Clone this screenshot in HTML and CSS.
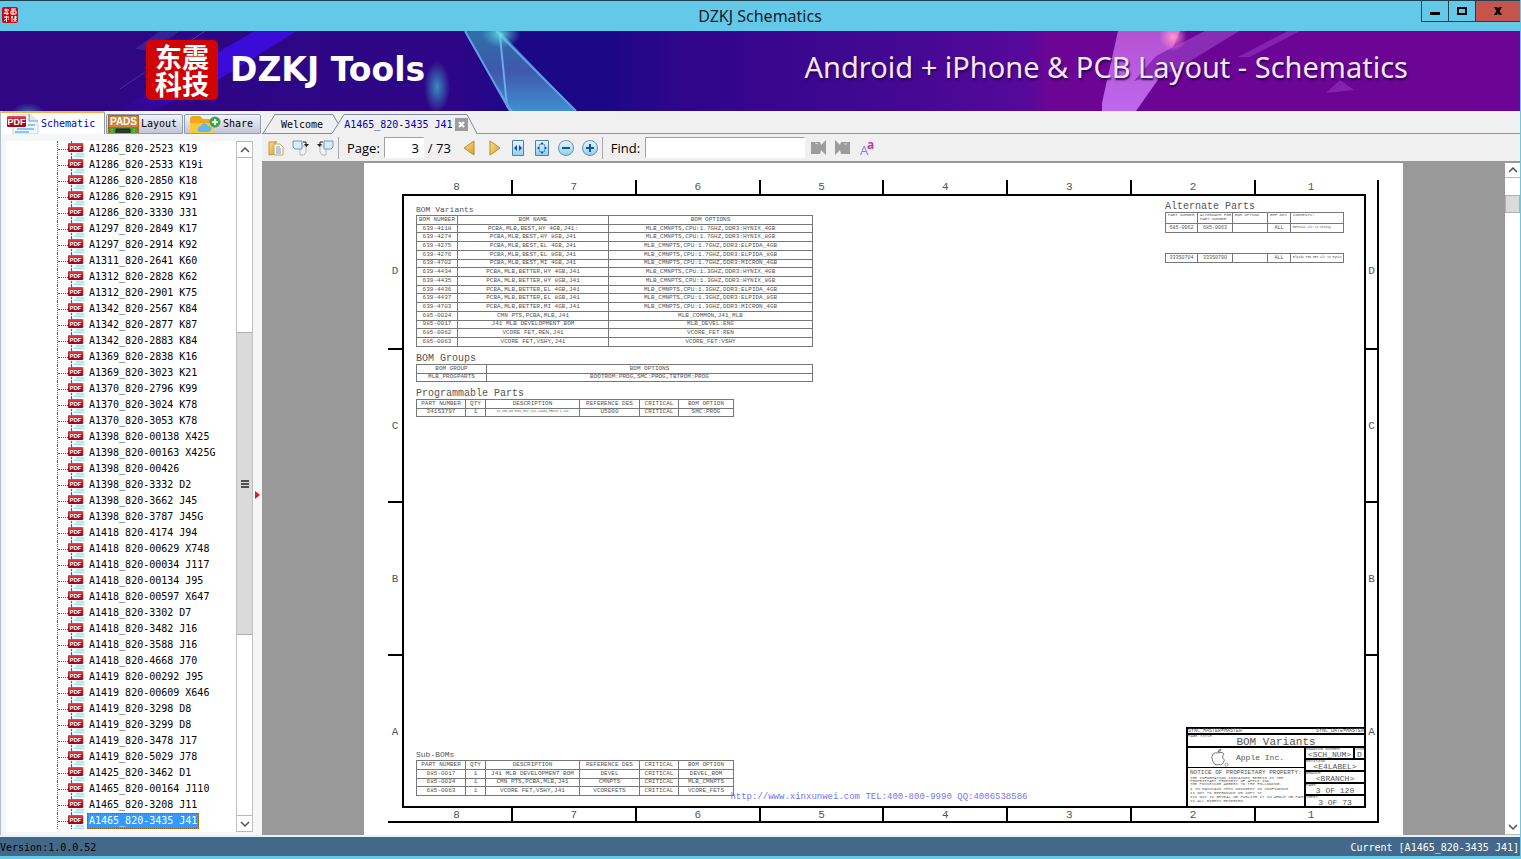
FILE: index.html
```html
<!DOCTYPE html>
<html lang="en">
<head>
<meta charset="utf-8">
<title>DZKJ Schematics</title>
<link rel="stylesheet" href="styles.css">
</head>
<body>
<svg class="defs" aria-hidden="true">
  <defs>
    <linearGradient id="red" x1="0" y1="0" x2="0" y2="1"><stop offset="0" stop-color="#e0505a"/><stop offset=".5" stop-color="#b80c18"/><stop offset="1" stop-color="#a00814"/></linearGradient>
    <linearGradient id="gold" x1="0" y1="0" x2="1" y2="1"><stop offset="0" stop-color="#fbe28a"/><stop offset="1" stop-color="#d9a02c"/></linearGradient>
    <linearGradient id="sky" x1="0" y1="0" x2="0" y2="1"><stop offset="0" stop-color="#e8f7ff"/><stop offset="1" stop-color="#8fcdf4"/></linearGradient>
    <symbol id="pdf" viewBox="0 0 17 16">
      <path d="M3 0h9l5 4v12H3z" fill="#eef9ff"/><path d="M3.500 0v2m0 10v4" stroke="#556" stroke-dasharray="2 1"/>
      <path d="M15 2v9M8 13h8M6 15.500h10" stroke="#a4dcf4" stroke-width="1.500"/>
      <rect y="2" width="15" height="9" rx="1" fill="url(#red)"/>
      <text x="7.500" y="9" text-anchor="middle" class="pdf-text">PDF</text>
    </symbol>
  </defs>
</svg>
<div class="window">
  <header class="titlebar">
    <svg class="appicon" viewBox="0 0 16 16"><rect width="16" height="16" rx="2" fill="#c80a10"/><path d="M2 3h5M4 1.500v3l-2 2h5M5 4v4M9 2h5M9 4h5v3H9zM11 2v6M2 10h5M4.500 9v6M2 14l3-3M6 12h1M9 10h2m-1-1v6M12 10h3m-1.500-1v3m-2 0h3l-3 3m0-3 3 3" stroke="#fff" fill="none"/></svg>
    <h1>DZKJ Schematics</h1>
    <div class="winbtns">
      <button aria-label="Minimize"><svg viewBox="0 0 12 12" width="12" height="12"><path d="M1 7h10v3H1z"/></svg></button>
      <button aria-label="Maximize"><svg viewBox="0 0 12 12" width="12" height="12"><path d="M2 3h8v6H2z" fill="none" stroke="#000" stroke-width="2"/></svg></button>
      <button class="close" aria-label="Close"><svg viewBox="0 0 12 12" width="12" height="12"><path d="M2 2h3l1 2 1-2h3L7.500 6l2.500 4H7L6 8l-1 2H2l2.500-4z"/></svg></button>
    </div>
  </header>

  <div class="banner">
    <svg class="art" viewBox="0 0 1520 80" preserveAspectRatio="none" aria-hidden="true">
      <defs>
        <linearGradient id="bg"><stop offset="0" stop-color="#300684"/><stop offset=".3" stop-color="#2c0686"/><stop offset=".34" stop-color="#1c0886"/><stop offset=".4" stop-color="#1c0886"/><stop offset=".45" stop-color="#30058a"/><stop offset=".6" stop-color="#450893"/><stop offset=".675" stop-color="#56089a"/><stop offset=".69" stop-color="#6c0596"/><stop offset="1" stop-color="#6c0597"/></linearGradient>
        <linearGradient id="beam" x1="1" y1="0" x2="0" y2="1"><stop offset="0" stop-color="#3d0bd8"/><stop offset=".5" stop-color="#3a0bd8"/><stop offset="1" stop-color="#3a0bd8" stop-opacity="0"/></linearGradient>
        <linearGradient id="glass" x1="0" y1="0" x2="0" y2="1"><stop offset="0" stop-color="#2f6fa8"/><stop offset=".5" stop-color="#3f58ac"/><stop offset="1" stop-color="#3f8fd0"/></linearGradient>
        <linearGradient id="pink" x1="0" y1="0" x2="0" y2="1"><stop offset="0" stop-color="#b452d2"/><stop offset="1" stop-color="#c067ee"/></linearGradient>
        <radialGradient id="glow"><stop offset="0" stop-color="#3c8ac0"/><stop offset="1" stop-color="#3c8ac0" stop-opacity="0"/></radialGradient>
        <radialGradient id="cyan"><stop offset="0" stop-color="#70f0e8"/><stop offset="1" stop-color="#58c8e0" stop-opacity="0"/></radialGradient>
        <radialGradient id="rose"><stop offset="0" stop-color="#ff98d0"/><stop offset="1" stop-color="#ff88d0" stop-opacity="0"/></radialGradient>
      </defs>
      <rect width="1520" height="80" fill="url(#bg)"/>
      <path d="M150 20 180 0h-20l-25 18z" fill="#4330a0" opacity=".6"/>
      <path d="M120 58 205 0M165 27 205 0" stroke="#5c48b4" opacity=".6"/>
      <path d="M255 0h42L200 60l-50 20h-35z" fill="url(#beam)"/>
      <ellipse cx="437" cy="56" rx="13" ry="26" fill="url(#glow)"/>
      <ellipse cx="28" cy="80" rx="16" ry="8" fill="url(#glow)" opacity=".6"/>
      <path d="M465 0h35l76 80h-66z" fill="url(#glass)"/>
      <path d="M500 5l7 70 5 5" fill="none" stroke="#6fa8f0" stroke-width="2"/>
      <path d="M465 0l45 80M496 0l80 80M498 58l12 20" stroke="#63a0e4" stroke-width="2"/>
      <ellipse cx="501" cy="3" rx="20" ry="14" fill="url(#cyan)" opacity=".8"/>
      <path d="M1118 0h62l-18 43-26 37h-34v-8z" fill="url(#pink)"/>
      <path d="M1205 0h34l-65 40-40 10 22-25z" fill="#8b2cb6"/>
      <path d="M1288 0h12l-50 26-12 0zM1340 49l14 10-28 3z" fill="#8422b0"/>
      <circle cx="1173" cy="6" r="14" fill="url(#rose)"/>
    </svg>
    <div class="brand">
      <div class="seal" lang="zh"><span>东震</span><span>科技</span></div>
      <strong>DZKJ Tools</strong>
    </div>
    <p class="slogan">Android + iPhone &amp; PCB Layout - Schematics</p>
  </div>

  <div class="main">
    <aside class="side">
      <nav class="sidetabs">
        <button class="sidetab active"><svg width="32" height="20" viewBox="0 0 32 20"><path d="M6 0h16l9 7v13H6z" fill="#eef7fc" stroke="#c8d4dc"/><path d="M22 0v7h9" fill="#dceaf2" stroke="#8898a4"/><path d="M10 15h17M8 18h14M21 11h7" stroke="#8cc8ea" stroke-width="2"/><rect y="2" width="19" height="11" rx="1" fill="url(#red)"/><text x="9.500" y="11" text-anchor="middle" class="pdf-big">PDF</text></svg>Schematic</button>
        <button class="sidetab"><svg width="31" height="19" viewBox="0 0 31 19"><rect width="31" height="19" fill="#b8601c"/><rect x="1" y="1" width="29" height="11" fill="#cc8438"/><path d="M2 12h27v7H2z" fill="#4c9c30"/><path d="M8 19v-5h14v5" fill="#283c30" stroke="#123"/><path d="M4 14v5M26 14v5" stroke="#c8d850" stroke-dasharray="1 1"/><text x="15.500" y="10" text-anchor="middle" class="pads">PADS</text></svg>Layout</button>
        <button class="sidetab"><svg width="32" height="19" viewBox="0 0 32 19"><path d="M1 4q0-3 3-3h7l3 3h9q2 0 2 2v13H1z" fill="#f0a818"/><path d="M1 8h24v11H1z" fill="#fcc838"/><path d="M11 17q-4-1-2-4 1-2 3-2 3-6 7 0 4 0 3 4-1 2-3 2z" fill="#60b8f4"/><circle cx="26" cy="7" r="5.500" fill="#3ca84c"/><path d="M26 4v6M23 7h6" stroke="#fff" stroke-width="2"/></svg>Share</button>
      </nav>
      <div class="treebox">
        <ul class="tree">
          <li><svg><use href="#pdf"/></svg><a href="#">A1286_820-2523 K19</a></li>
          <li><svg><use href="#pdf"/></svg><a href="#">A1286_820-2533 K19i</a></li>
          <li><svg><use href="#pdf"/></svg><a href="#">A1286_820-2850 K18</a></li>
          <li><svg><use href="#pdf"/></svg><a href="#">A1286_820-2915 K91</a></li>
          <li><svg><use href="#pdf"/></svg><a href="#">A1286_820-3330 J31</a></li>
          <li><svg><use href="#pdf"/></svg><a href="#">A1297_820-2849 K17</a></li>
          <li><svg><use href="#pdf"/></svg><a href="#">A1297_820-2914 K92</a></li>
          <li><svg><use href="#pdf"/></svg><a href="#">A1311_820-2641 K60</a></li>
          <li><svg><use href="#pdf"/></svg><a href="#">A1312_820-2828 K62</a></li>
          <li><svg><use href="#pdf"/></svg><a href="#">A1312_820-2901 K75</a></li>
          <li><svg><use href="#pdf"/></svg><a href="#">A1342_820-2567 K84</a></li>
          <li><svg><use href="#pdf"/></svg><a href="#">A1342_820-2877 K87</a></li>
          <li><svg><use href="#pdf"/></svg><a href="#">A1342_820-2883 K84</a></li>
          <li><svg><use href="#pdf"/></svg><a href="#">A1369_820-2838 K16</a></li>
          <li><svg><use href="#pdf"/></svg><a href="#">A1369_820-3023 K21</a></li>
          <li><svg><use href="#pdf"/></svg><a href="#">A1370_820-2796 K99</a></li>
          <li><svg><use href="#pdf"/></svg><a href="#">A1370_820-3024 K78</a></li>
          <li><svg><use href="#pdf"/></svg><a href="#">A1370_820-3053 K78</a></li>
          <li><svg><use href="#pdf"/></svg><a href="#">A1398_820-00138 X425</a></li>
          <li><svg><use href="#pdf"/></svg><a href="#">A1398_820-00163 X425G</a></li>
          <li><svg><use href="#pdf"/></svg><a href="#">A1398_820-00426</a></li>
          <li><svg><use href="#pdf"/></svg><a href="#">A1398_820-3332 D2</a></li>
          <li><svg><use href="#pdf"/></svg><a href="#">A1398_820-3662 J45</a></li>
          <li><svg><use href="#pdf"/></svg><a href="#">A1398_820-3787 J45G</a></li>
          <li><svg><use href="#pdf"/></svg><a href="#">A1418 820-4174 J94</a></li>
          <li><svg><use href="#pdf"/></svg><a href="#">A1418 820-00629 X748</a></li>
          <li><svg><use href="#pdf"/></svg><a href="#">A1418_820-00034 J117</a></li>
          <li><svg><use href="#pdf"/></svg><a href="#">A1418_820-00134 J95</a></li>
          <li><svg><use href="#pdf"/></svg><a href="#">A1418_820-00597 X647</a></li>
          <li><svg><use href="#pdf"/></svg><a href="#">A1418_820-3302 D7</a></li>
          <li><svg><use href="#pdf"/></svg><a href="#">A1418_820-3482 J16</a></li>
          <li><svg><use href="#pdf"/></svg><a href="#">A1418_820-3588 J16</a></li>
          <li><svg><use href="#pdf"/></svg><a href="#">A1418_820-4668 J70</a></li>
          <li><svg><use href="#pdf"/></svg><a href="#">A1419 820-00292 J95</a></li>
          <li><svg><use href="#pdf"/></svg><a href="#">A1419 820-00609 X646</a></li>
          <li><svg><use href="#pdf"/></svg><a href="#">A1419_820-3298 D8</a></li>
          <li><svg><use href="#pdf"/></svg><a href="#">A1419_820-3299 D8</a></li>
          <li><svg><use href="#pdf"/></svg><a href="#">A1419_820-3478 J17</a></li>
          <li><svg><use href="#pdf"/></svg><a href="#">A1419_820-5029 J78</a></li>
          <li><svg><use href="#pdf"/></svg><a href="#">A1425_820-3462 D1</a></li>
          <li><svg><use href="#pdf"/></svg><a href="#">A1465_820-00164 J110</a></li>
          <li><svg><use href="#pdf"/></svg><a href="#">A1465_820-3208 J11</a></li>
          <li><svg><use href="#pdf"/></svg><a href="#" class="selected">A1465_820-3435 J41</a></li>
        </ul>
        <div class="scroll sidescroll">
          <button aria-label="Scroll up"><svg viewBox="0 0 10 10"><path d="M1 7l4-4 4 4"/></svg></button>
          <span class="before"></span><span class="thumb"><i></i></span><span class="after"></span>
          <button aria-label="Scroll down"><svg viewBox="0 0 10 10"><path d="M1 3l4 4 4-4"/></svg></button>
        </div>
      </div>
      <button class="splitter" aria-label="Collapse list"></button>
    </aside>

    <section class="content">
      <nav class="doctabs">
        <svg class="tabshape" width="216" height="23" viewBox="0 0 216 23" aria-hidden="true"><path d="M1 22.500 13 3.500H71l5 9" fill="none" stroke="#7c8c9c"/><path d="M0 22.500H70L82 3.500H205L215 22.500" fill="#f0f0f0" stroke="#7c8c9c"/><path d="M71 22.500H214" stroke="#f0f0f0"/></svg>
        <button class="doctab">Welcome</button>
        <button class="doctab active">A1465_820-3435 J41</button>
        <button class="tabclose" aria-label="Close tab"><svg width="13" height="13" viewBox="0 0 13 13"><path d="M4 4l5 5M9 4l-5 5" stroke="#fff" stroke-width="2"/></svg></button>
        <span class="tabline"></span>
      </nav>
      <div class="toolbar">
        <button aria-label="Copy"><svg width="16" height="16" viewBox="0 0 16 16"><path d="M1 2h6l1-1v13l-7 1z" fill="url(#gold)" stroke="#c89838"/><path d="M6 4h6l3 3v8H6z" fill="#f8fbff" stroke="#d0a450"/><path d="M8 7h4M8 9h5M8 11h5M8 13h5" stroke="#7898c0"/></svg></button>
        <button aria-label="Rotate right"><svg width="17" height="16" viewBox="0 0 17 16"><path d="M8 6h6v6l-2 3H8z" fill="#f4f4f4" stroke="#b4b4b8"/><path d="M1 1h9v8H3L1 7z" fill="#d8ecfc" stroke="#7098c0"/><path d="M11 2h3v3" stroke="#222" fill="none"/><path d="M12 4h5l-2.500 3z" fill="#222"/></svg></button>
        <button aria-label="Rotate left"><svg width="17" height="16" viewBox="0 0 17 16"><path d="M3 6h6v9H5l-2-3z" fill="#f4f4f4" stroke="#b4b4b8"/><path d="M7 1h9v6l-2 2H7z" fill="#d8ecfc" stroke="#7098c0"/><path d="M6 2H3v3" stroke="#222" fill="none"/><path d="M0 4h5L2.500 7z" fill="#222"/></svg></button>
        <span class="sep"></span>
        <label for="page">Page:</label>
        <input id="page" class="pageno" value="3">
        <span class="total">/ 73</span>
        <button class="step" aria-label="Previous page"><svg width="12" height="16" viewBox="0 0 12 16"><path d="M11 1v14L1 8z" fill="url(#gold)" stroke="#b88a28"/></svg></button>
        <button class="step" aria-label="Next page"><svg width="12" height="16" viewBox="0 0 12 16"><path d="M1 1v14l10-7z" fill="url(#gold)" stroke="#b88a28"/></svg></button>
        <button class="fit" aria-label="Fit width"><svg width="12" height="16" viewBox="0 0 12 16"><path d="M.5.5h11v15H.5z" fill="url(#sky)" stroke="#5080b0"/><path d="M5 5v6L2 8zM7 5v6l3-3z" fill="#1c4c94"/></svg></button>
        <button class="fit" aria-label="Fit page"><svg width="14" height="16" viewBox="0 0 14 16"><path d="M.5.5h13v15H.5z" fill="url(#sky)" stroke="#5080b0"/><path d="M7 2l2 2.500H5zM7 14l2-2.500H5zM2 8l2.500-2v4zM12 8 9.500 6v4z" fill="#1c4c94"/><path d="M4 5h1M9 5h1M4 11h1M9 11h1" stroke="#1c4c94"/></svg></button>
        <button class="zoom" aria-label="Zoom out"><svg width="16" height="16" viewBox="0 0 16 16"><circle cx="8" cy="8" r="7.500" fill="url(#sky)" stroke="#6c90a8"/><path d="M4 8h8" stroke="#145494" stroke-width="2"/></svg></button>
        <button aria-label="Zoom in"><svg width="16" height="16" viewBox="0 0 16 16"><circle cx="8" cy="8" r="7.500" fill="url(#sky)" stroke="#6c90a8"/><path d="M4 8h8M8 4v8" stroke="#145494" stroke-width="2"/></svg></button>
        <span class="sep"></span>
        <label for="find">Find:</label>
        <input id="find" class="find">
        <button class="find-btn" aria-label="Find previous"><svg width="15" height="15" viewBox="0 0 15 15"><path d="M0 2h9l1 3 5-5v15l-5-5-1 4H0z" fill="#9c9c9c"/><path d="M4 3l3 1" stroke="#ddd"/></svg></button>
        <button class="find-btn" aria-label="Find next"><svg width="15" height="15" viewBox="0 0 15 15"><path d="M15 2H6L5 5 0 0v15l5-5 1 4h9z" fill="#9c9c9c"/><path d="M9 4h3" stroke="#ddd"/></svg></button>
        <button class="find-btn" aria-label="Match case"><svg width="18" height="26" viewBox="0 0 18 26"><text x="1" y="20" class="capA">A</text><text x="8" y="14" class="lowa">a</text></svg></button>
      </div>

      <div class="viewer">
        <div class="canvas">
          <div class="sheet">
            <div class="drawing">
              <div class="ruler top"><span>8</span><span>7</span><span>6</span><span>5</span><span>4</span><span>3</span><span>2</span><span>1</span></div>
              <div class="ruler left"><span>D</span><span>C</span><span>B</span><span>A</span></div>
              <div class="frame">
                <div class="boms">
                  <h2 class="small">BOM Variants</h2>
                  <table class="variants">
                    <colgroup><col class="c41"><col class="c151"><col></colgroup>
                    <tr><th>BOM NUMBER</th><th>BOM NAME</th><th>BOM OPTIONS</th></tr>
                    <tr><td>639-4118</td><td>PCBA,MLB,BEST,HY 4GB,J41:</td><td>MLB_CMNPTS,CPU:1.7GHZ,DDR3:HYNIX_4GB</td></tr>
                    <tr><td>639-4274</td><td>PCBA,MLB,BEST,HY 8GB,J41</td><td>MLB_CMNPTS,CPU:1.7GHZ,DDR3:HYNIX_8GB</td></tr>
                    <tr><td>639-4275</td><td>PCBA,MLB,BEST,EL 4GB,J41</td><td>MLB_CMNPTS,CPU:1.7GHZ,DDR3:ELPIDA_4GB</td></tr>
                    <tr><td>639-4276</td><td>PCBA,MLB,BEST,EL 8GB,J41</td><td>MLB_CMNPTS,CPU:1.7GHZ,DDR3:ELPIDA_8GB</td></tr>
                    <tr><td>639-4702</td><td>PCBA,MLB,BEST,MI 4GB,J41</td><td>MLB_CMNPTS,CPU:1.7GHZ,DDR3:MICRON_4GB</td></tr>
                    <tr><td>639-4434</td><td>PCBA,MLB,BETTER,HY 4GB,J41</td><td>MLB_CMNPTS,CPU:1.3GHZ,DDR3:HYNIX_4GB</td></tr>
                    <tr><td>639-4435</td><td>PCBA,MLB,BETTER,HY 8GB,J41</td><td>MLB_CMNPTS,CPU:1.3GHZ,DDR3:HYNIX_8GB</td></tr>
                    <tr><td>639-4436</td><td>PCBA,MLB,BETTER,EL 4GB,J41</td><td>MLB_CMNPTS,CPU:1.3GHZ,DDR3:ELPIDA_4GB</td></tr>
                    <tr><td>639-4437</td><td>PCBA,MLB,BETTER,EL 8GB,J41</td><td>MLB_CMNPTS,CPU:1.3GHZ,DDR3:ELPIDA_8GB</td></tr>
                    <tr><td>639-4703</td><td>PCBA,MLB,BETTER,MI 4GB,J41</td><td>MLB_CMNPTS,CPU:1.3GHZ,DDR3:MICRON_4GB</td></tr>
                    <tr><td>685-0024</td><td>CMN PTS,PCBA,MLB,J41</td><td>MLB_COMMON,J41_MLB</td></tr>
                    <tr><td>985-0017</td><td>J41 MLB DEVELOPMENT BOM</td><td>MLB_DEVEL:ENG</td></tr>
                    <tr><td>685-0062</td><td>VCORE FET,REN,J41</td><td>VCORE_FET:REN</td></tr>
                    <tr><td>685-0063</td><td>VCORE FET,VSHY,J41</td><td>VCORE_FET:VSHY</td></tr>
                  </table>
                  <h2>BOM Groups</h2>
                  <table class="groups">
                    <colgroup><col class="c70"><col></colgroup>
                    <tr><th>BOM GROUP</th><th>BOM OPTIONS</th></tr>
                    <tr><td>MLB_PROGPARTS</td><td>BOOTROM:PROG,SMC:PROG,TBTROM:PROG</td></tr>
                  </table>
                  <h2>Programmable Parts</h2>
                  <table class="parts">
                    <colgroup><col class="c49"><col class="c20"><col class="c94"><col class="c60"><col class="c39"><col></colgroup>
                    <tr><th>PART NUMBER</th><th>QTY</th><th>DESCRIPTION</th><th>REFERENCE DES</th><th>CRITICAL</th><th>BOM OPTION</th></tr>
                    <tr><td>341S3797</td><td>1</td><td class="tiny">IC,SMC-A3 HYNL,EXT,V12.12A10,PROTO 1,J41</td><td>U5000</td><td>CRITICAL</td><td>SMC:PROG</td></tr>
                  </table>
                </div>
                <div class="alternates">
                  <h2>Alternate Parts</h2>
                  <table class="alt">
                    <colgroup><col class="c32"><col class="c35"><col class="c35"><col class="c23"><col></colgroup>
                    <tr><th>PART NUMBER</th><th>ALTERNATE FOR PART NUMBER</th><th>BOM OPTION</th><th>REF DES</th><th>COMMENTS:</th></tr>
                    <tr><td>685-0062</td><td>685-0063</td><td></td><td>ALL</td><td class="note">Renesas alt to Vishay</td></tr>
                  </table>
                  <table class="alt second">
                    <colgroup><col class="c32"><col class="c35"><col class="c35"><col class="c23"><col></colgroup>
                    <tr><td>333S0704</td><td>333S0700</td><td></td><td>ALL</td><td class="note">Elpida PGD MEM alt to Hynix</td></tr>
                  </table>
                </div>
                <div class="subboms">
                  <h2 class="small">Sub-BOMs</h2>
                  <table class="parts sub">
                    <colgroup><col class="c49"><col class="c20"><col class="c94"><col class="c60"><col class="c39"><col></colgroup>
                    <tr><th>PART NUMBER</th><th>QTY</th><th>DESCRIPTION</th><th>REFERENCE DES</th><th>CRITICAL</th><th>BOM OPTION</th></tr>
                    <tr><td>985-0017</td><td>1</td><td>J41 MLB DEVELOPMENT BOM</td><td>DEVEL</td><td>CRITICAL</td><td>DEVEL_BOM</td></tr>
                    <tr><td>685-0024</td><td>1</td><td>CMN PTS,PCBA,MLB,J41</td><td>CMNPTS</td><td>CRITICAL</td><td>MLB_CMNPTS</td></tr>
                    <tr><td>685-0063</td><td>1</td><td>VCORE FET,VSHY,J41</td><td>VCOREFETS</td><td>CRITICAL</td><td>VCORE_FETS</td></tr>
                  </table>
                </div>
                <div class="titleblock">
                  <div class="sync"><span>SYNC_MASTER=MASTER</span><span>SYNC_DATE=MASTER</span></div>
                  <div class="ptitle"><small>PAGE TITLE</small>BOM Variants</div>
                  <div class="tb-body">
                    <div class="tb-left">
                      <div class="company"><svg width="20" height="18" viewBox="0 0 20 18"><path d="M9 4q2-1 4-.5 1.500.5 2 1.500-3 3 .5 6-2 5-4 5-2-1-4 0-2 0-3.500-3.500Q1.500 8 4 5q2-2 5-1zM9 3q0-2 3-3 0 2-3 3z" fill="none" stroke="#555" stroke-width=".8"/><circle cx="17.500" cy="15.500" r="1.500" fill="none" stroke="#555" stroke-width=".6"/></svg>Apple Inc.</div>
                      <div class="notice"><b>NOTICE OF PROPRIETARY PROPERTY:</b>
                        <p>THE INFORMATION CONTAINED HEREIN IS THE<br>PROPRIETARY PROPERTY OF APPLE INC.<br>THE POSSESSOR AGREES TO THE FOLLOWING:</p>
                        <ol><li>I TO MAINTAIN THIS DOCUMENT IN CONFIDENCE</li><li>II NOT TO REPRODUCE OR COPY IT</li><li>III NOT TO REVEAL OR PUBLISH IT IN WHOLE OR PART</li><li>IV ALL RIGHTS RESERVED</li></ol></div>
                    </div>
                    <div class="tb-right">
                      <div class="split"><div><small>DRAWING NUMBER</small>&lt;SCH_NUM&gt;</div><div class="size"><small>SIZE</small>D</div></div>
                      <div><small>REVISION</small>&lt;E4LABEL&gt;</div>
                      <div><small>BRANCH</small>&lt;BRANCH&gt;</div>
                      <div><small>PAGE</small>3 OF 120</div>
                      <div><small>SHEET</small>3 OF 73</div>
                    </div>
                  </div>
                </div>
                <a class="watermark" href="#">http://www.xinxunwei.com TEL:400-800-9990 QQ:4006538586</a>
              </div>
              <div class="ruler right"><span>D</span><span>C</span><span>B</span><span>A</span></div>
              <div class="ruler bottom"><span>8</span><span>7</span><span>6</span><span>5</span><span>4</span><span>3</span><span>2</span><span>1</span></div>
            </div>
          </div>
        </div>
        <div class="scroll docscroll">
          <button aria-label="Scroll up"><svg viewBox="0 0 10 10"><path d="M1 7l4-4 4 4"/></svg></button>
          <span class="before"></span><span class="thumb"></span><span class="after"></span>
          <button aria-label="Scroll down"><svg viewBox="0 0 10 10"><path d="M1 3l4 4 4-4"/></svg></button>
        </div>
      </div>
    </section>
  </div>
  <footer class="status"><span>Version:1.0.0.52</span><span class="current">Current [A1465_820-3435 J41]</span></footer>
</div>
</body>
</html>
```
FILE: styles.css
```css
* { box-sizing: border-box; }
body { margin: 0; font: 10px/16px "DejaVu Sans Mono", "Liberation Mono", monospace; color: #000; }
button { border: 0; padding: 0; margin: 0; background: none; font: inherit; color: inherit; display: flex; align-items: center; }
svg { display: block; flex: none; }
a { color: inherit; text-decoration: none; }
.defs { position: absolute; width: 0; height: 0; }

.window { display: flex; flex-direction: column; height: 100vh; border-right: 1px solid #64c9e8; border-bottom: 3px solid #64c9e8; background: #f0f0f0; overflow: hidden; }

/* title bar */
.titlebar { position: relative; flex: none; height: 31px; background: #64c9e8; border-top: 1px solid #1c4050; display: flex; align-items: center; justify-content: center; }
.titlebar h1 { margin: 0; font: 16px/20px "Noto Sans", sans-serif; color: #10202c; }
.appicon { position: absolute; left: 2px; top: 6px; width: 16px; height: 16px; }
.winbtns { position: absolute; right: 0; top: 0; display: flex; border-left: 1px solid #20404c; border-bottom: 1px solid #20404c; }
.winbtns button { width: 27px; height: 20px; justify-content: center; border-right: 1px solid #20404c; }
.winbtns .close { width: 44px; background: #c4544c; border-right: 0; }

/* banner */
.banner { position: relative; flex: none; height: 80px; display: flex; align-items: center; justify-content: space-between; padding: 0 112px 3px 146px; color: #fff; overflow: hidden; }
.art { position: absolute; inset: 0; width: 100%; height: 100%; }
.brand { position: relative; display: flex; align-items: center; gap: 12px; }
.brand strong { font: bold 33px/40px "DejaVu Sans", sans-serif; }
.seal { width: 72px; height: 60px; border-radius: 5px; background: #d00404; display: flex; flex-direction: column; align-items: center; justify-content: center; font: bold 27px/27px "Noto Sans CJK SC", sans-serif; }
.slogan { position: relative; margin: 0; padding-bottom: 6px; font: 29px/36px "Noto Sans", sans-serif; color: #f4e8fc; text-shadow: 1px 2px 2px #2c0050; }

.main { flex: 1; min-height: 0; display: flex; border-bottom: 2px solid #e8f2fa; }

/* left panel */
.side { position: relative; flex: none; width: 262px; display: flex; flex-direction: column; background: #f4f6f8; border-left: 1px solid #b0bcc8; }
.sidetabs { display: flex; align-items: flex-end; gap: 1px; height: 23px; }
.sidetab { height: 20px; width: 77px; padding-left: 1px; gap: 2px; overflow: hidden; border: 1px solid #8c9cb4; border-radius: 2px 2px 0 0; background: linear-gradient(#f4f4fc, #c4c4d8); }
.sidetab:last-child { padding-left: 4px; }
.sidetab.active { height: 23px; width: 104px; padding-left: 6px; color: #0000b4; background: #fff; border: 0; border-top: 2px solid #f4b040; border-right: 1px solid #8c9cb4; }
.treebox { flex: 1; min-height: 0; display: flex; margin: 7px 9px 3px 5px; background: #fff; }
.tree { list-style: none; flex: 1; margin: 0; padding: 0 0 0 51px; overflow: hidden; }
.tree li { display: flex; align-items: center; height: 16px; border-left: 1px dotted #606060; }
.tree li::before { content: ""; width: 10px; border-top: 1px dotted #606060; }
.tree svg { width: 17px; height: 16px; }
.tree a { margin-left: 2px; padding: 0 1px; line-height: 14px; border: 1px solid transparent; white-space: nowrap; }
.tree .selected { background: #3399ff; color: #fff; border: 1px dotted #a05800; }
.pdf-text { font: bold 6px "Liberation Sans", sans-serif; fill: #fff; }
.pdf-big { font: bold 9px "Liberation Sans", sans-serif; fill: #fff; }
.pads { font: bold 10px "Liberation Sans", sans-serif; fill: #fff; }
.splitter { position: absolute; right: 2px; top: 52%; width: 0; height: 0; margin-top: 4px; border: 4px solid transparent; border-left: 5px solid #e01c1c; border-right: 0; }

/* scroll bars */
.scroll { flex: none; display: flex; flex-direction: column; background: #fff; }
.scroll button { height: 17px; justify-content: center; border: 1px solid #b8b8b8; background: #fff; }
.scroll svg { width: 10px; height: 10px; fill: none; stroke: #505050; stroke-width: 1.500; }
.thumb { display: flex; align-items: center; justify-content: center; background: #dadada; border: 1px solid #b0b0b0; }
.thumb i { width: 8px; height: 8px; background: repeating-linear-gradient(#505050 0 2px, transparent 2px 3px); }
.sidescroll { width: 17px; border: 1px solid #c0c0c0; border-width: 0 1px; }
.sidescroll button { border-width: 1px 0; }
.sidescroll .before { flex: 175; }
.sidescroll .thumb { flex: 301; border-width: 1px 0; }
.sidescroll .after { flex: 181; }
.docscroll { width: 15px; }
.docscroll button { height: 15px; border-width: 0 0 1px; }
.docscroll .before { flex: 17; }
.docscroll .thumb { flex: 16; }
.docscroll .after { flex: 610; }

/* document tabs */
.content { flex: 1; min-width: 0; display: flex; flex-direction: column; }
.doctabs { position: relative; flex: none; display: flex; align-items: center; height: 23px; }
.tabshape { position: absolute; left: 0; top: 0; }
.doctab { position: relative; padding: 4px 0 0 19px; }
.doctab.active { padding-left: 21px; color: #0000b4; }
.tabclose { position: relative; margin: 4px 8px 0 2px; background: #9c9c9c; }
.tabline { flex: 1; align-self: flex-end; border-bottom: 1px solid #8c98a4; }

/* toolbar */
.toolbar { flex: none; display: flex; align-items: center; height: 29px; padding-left: 6px; border-bottom: 2px solid #999; font: 13px/18px "Open Sans", "Noto Sans", sans-serif; }
.toolbar button + button { margin-left: 8px; }
.toolbar .sep { width: 1px; height: 22px; margin: 0 8px 0 4px; background: #a8a8a8; }
.toolbar input { height: 21px; padding: 0 4px; border: 1px solid #a0a0a0; border-color: #a0a0a0 #fff #fff #a0a0a0; background: #fff; font: inherit; }
.toolbar .pageno { width: 40px; margin: 0 4px 0 4px; text-align: right; }
.toolbar .find { width: 160px; margin: 0 6px 0 5px; }
.toolbar .total { margin-right: 12px; }
.toolbar .step + .step { margin-left: 14px; }
.toolbar .fit { margin-left: 11px; }
.toolbar .zoom { margin-left: 9px; }
.toolbar .find-btn + .find-btn { margin-left: 9px; }
.capA { font: 13px "Open Sans", sans-serif; fill: #8c78f0; }
.lowa { font: bold 12px "Open Sans", sans-serif; fill: #c83ca0; }

/* page viewer */
.viewer { flex: 1; min-height: 0; display: flex; }
.canvas { flex: 1; min-width: 0; display: flex; padding: 0 102px; background: #999; }
.sheet { flex: 1; min-width: 0; display: flex; padding: 17px 24px 12px; background: #fff; font-family: "Liberation Mono", monospace; color: #555; }
.drawing { flex: 1; display: grid; grid-template: 14px 1fr 13px / 14px 1fr 11px; border: 2px solid #000; border-width: 0 2px 2px 0; }
.ruler { display: grid; font-size: 11px; line-height: 14px; }
.ruler span { display: flex; align-items: center; justify-content: center; }
.top, .bottom { grid-column: 2; grid-template-columns: 111fr repeat(6, 124fr) 110fr; }
.top span, .bottom span { border-right: 2px solid #000; }
.top span:last-child, .bottom span:last-child { border-right: 0; }
.left, .right { grid-row: 2; grid-template-rows: 156fr 153fr 153fr 152fr; }
.left { grid-column: 1; }
.left span, .right span { border-bottom: 2px solid #000; }
.left span:last-child, .right span:last-child { border-bottom: 0; }
.frame { position: relative; grid-column: 2; grid-row: 2; border: 2px solid #000; display: grid; grid-template: 1fr auto / auto auto; justify-content: space-between; padding-left: 12px; }
.frame h2 { margin: 7px 0 0; font-size: 10px; font-weight: normal; line-height: 10px; }
.frame h2.small { font-size: 8px; }
.boms { padding-top: 2px; }
.frame table { border-collapse: collapse; table-layout: fixed; font-size: 6px; line-height: 6px; }
.frame th, .frame td { padding: 0; border: 1px solid #777; font-weight: normal; text-align: center; white-space: nowrap; overflow: hidden; }
.variants { width: 397px; height: 132px; }
.groups { width: 397px; height: 18px; }
.parts { width: 318px; height: 18px; }
.frame .sub { height: 36px; }
.c20 { width: 20px; } .c23 { width: 23px; } .c32 { width: 32px; } .c35 { width: 35px; } .c39 { width: 39px; } .c41 { width: 41px; }
.c49 { width: 49px; } .c60 { width: 60px; } .c70 { width: 70px; } .c94 { width: 94px; } .c151 { width: 151px; }
.frame .tiny { font-size: 3px; }
.alternates { padding-right: 20px; }
.alternates h2 { margin-top: 6px; }
.frame .alt { width: 179px; font-size: 5px; }
.frame .alt th { height: 11px; padding-left: 2px; font-size: 4px; line-height: 4px; text-align: left; white-space: normal; vertical-align: top; }
.frame .alt td { height: 9px; }
.frame .alt .note { padding-left: 2px; font-size: 3px; text-align: left; }
.second { margin-top: 20px; }
.subboms { align-self: end; padding-bottom: 10px; }

/* title block */
.titleblock { align-self: end; justify-self: end; width: 178px; border: 2px solid #000; border-width: 2px 0 0 2px; text-align: center; }
.titleblock small { display: block; font-size: 4px; line-height: 3px; text-align: left; }
.sync { display: flex; justify-content: space-between; font-size: 5px; line-height: 4px; border-bottom: 2px solid #000; }
.ptitle { font-size: 11px; line-height: 8px; border-bottom: 2px solid #000; }
.tb-body { display: grid; grid-template-columns: 118px 1fr; }
.tb-left { border-right: 2px solid #000; min-width: 0; }
.company { display: flex; align-items: center; gap: 7px; height: 20px; padding-left: 21px; font-size: 8px; border-bottom: 1px solid #000; }
.notice { padding: 1px 2px; font-size: 4px; line-height: 4px; text-align: left; white-space: nowrap; overflow: hidden; }
.notice b { display: block; font-size: 6px; line-height: 7px; font-weight: normal; }
.notice p { margin: 1px 0; line-height: 3px; }
.notice ol { list-style: none; margin: 0; padding: 0; }
.tb-right > div { font-size: 8px; line-height: 7px; border-bottom: 2px solid #000; }
.tb-right > div:last-child { border-bottom: 0; }
.tb-right .split { display: grid; grid-template-columns: 1fr 11px; }
.size { border-left: 2px solid #000; overflow: hidden; }
.watermark { position: absolute; left: 34%; bottom: 0; font-size: 9px; line-height: 18px; color: #7474f0; white-space: nowrap; }

.status { flex: none; height: 19px; display: flex; justify-content: space-between; padding: 3px 1px 0 0; background: #44688a; }
.status .current { color: #fff; }
```
